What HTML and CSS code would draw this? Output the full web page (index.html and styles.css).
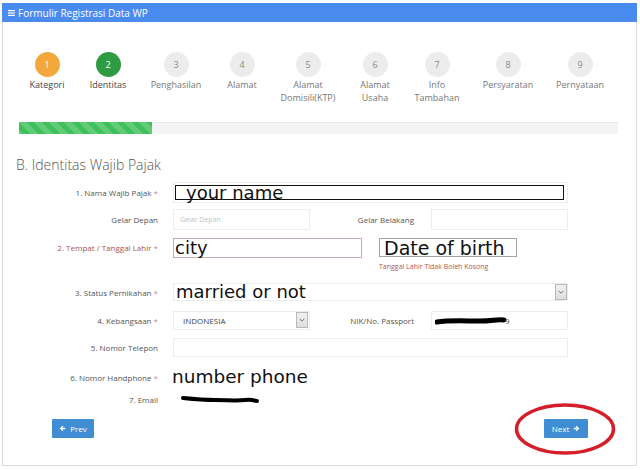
FILE: index.html
```html
<!DOCTYPE html>
<html lang="id">
<head>
<meta charset="utf-8">
<title>Formulir Registrasi Data WP</title>
<link rel="stylesheet" href="styles.css">
</head>
<body>
<div class="panel">
  <div class="panel-heading">
    <svg class="bars" viewBox="0 0 7 6" aria-hidden="true"><rect x="0" y="0" width="7" height="1.2"/><rect x="0" y="2.4" width="7" height="1.2"/><rect x="0" y="4.8" width="7" height="1.2"/></svg>
    <span>Formulir Registrasi Data WP</span>
  </div>

  <div class="steps">
    <div class="step done"><span class="num">1</span><span class="name">Kategori</span></div>
    <div class="step current"><span class="num">2</span><span class="name">Identitas</span></div>
    <div class="step"><span class="num">3</span><span class="name">Penghasilan</span></div>
    <div class="step"><span class="num">4</span><span class="name">Alamat</span></div>
    <div class="step"><span class="num">5</span><span class="name">Alamat<br>Domisili(KTP)</span></div>
    <div class="step"><span class="num">6</span><span class="name">Alamat<br>Usaha</span></div>
    <div class="step"><span class="num">7</span><span class="name">Info<br>Tambahan</span></div>
    <div class="step"><span class="num">8</span><span class="name">Persyaratan</span></div>
    <div class="step"><span class="num">9</span><span class="name">Pernyataan</span></div>
  </div>

  <div class="progress"><div class="bar" style="width:22.2%"></div></div>

  <h3 class="section-title">B. Identitas Wajib Pajak</h3>

  <div class="form">
    <div class="row r1">
      <label class="lbl">1. Nama Wajib Pajak <span class="ast">*</span></label>
      <div class="field full"><span class="mark name-mark">your name</span></div>
    </div>

    <div class="row r2">
      <label class="lbl">Gelar Depan</label>
      <div class="field half"><span class="ph">Gelar Depan</span></div>
      <label class="lbl2">Gelar Belakang</label>
      <div class="field half"></div>
    </div>

    <div class="row r3">
      <label class="lbl err">2. Tempat / Tanggal Lahir <span class="ast">*</span></label>
      <div class="field city"><span class="big city-text">city</span></div>
      <div class="dob-group">
        <div class="field dob"><span class="big dob-text">Date of birth</span></div>
        <div class="help">Tanggal Lahir Tidak Boleh Kosong</div>
      </div>
    </div>

    <div class="row r4">
      <label class="lbl">3. Status Pernikahan <span class="ast">*</span></label>
      <div class="field full select">
        <span class="big status-text">married or not</span>
        <span class="caret"><svg viewBox="0 0 8 5"><polyline points="1,1 4,4 7,1"/></svg></span>
      </div>
    </div>

    <div class="row r5">
      <label class="lbl">4. Kebangsaan <span class="ast">*</span></label>
      <div class="field half select">
        <span class="val">INDONESIA</span>
        <span class="caret"><svg viewBox="0 0 8 5"><polyline points="1,1 4,4 7,1"/></svg></span>
      </div>
      <label class="lbl2">NIK/No. Passport</label>
      <div class="field half nik">
        <svg class="scribble nik-scribble" viewBox="0 0 72 8" aria-hidden="true"><path d="M2 5 C 14 3, 30 4, 44 4 S 62 2, 69 3"/></svg>
        <span class="val">9</span>
      </div>
    </div>

    <div class="row r6">
      <label class="lbl">5. Nomor Telepon</label>
      <div class="field full"></div>
    </div>

    <div class="row r7">
      <label class="lbl">6. Nomor Handphone <span class="ast">*</span></label>
      <span class="big phone-text">number phone</span>
    </div>

    <div class="row r8">
      <label class="lbl">7. Email</label>
      <svg class="scribble email-scribble" viewBox="0 0 78 9" aria-hidden="true"><path d="M2 3 C 12 4, 22 5, 34 5 S 55 6, 64 5 S 72 6, 76 6"/></svg>
    </div>
  </div>

  <div class="actions">
    <button class="btn"><svg class="arrow" viewBox="0 0 10 10"><path d="M1 5 L5 1 L6.3 2.3 L4.4 4.1 H9 V5.9 H4.4 L6.3 7.7 L5 9 Z"/></svg>Prev</button>
    <button class="btn">Next<svg class="arrow" viewBox="0 0 10 10"><path d="M9 5 L5 1 L3.7 2.3 L5.6 4.1 H1 V5.9 H5.6 L3.7 7.7 L5 9 Z"/></svg></button>
  </div>

  <svg class="annot-circle" viewBox="0 0 102 54" aria-hidden="true"><ellipse cx="51" cy="27" rx="48.5" ry="24"/></svg>
</div>
</body>
</html>
```

FILE: styles.css
```css
* { box-sizing: border-box; }

html, body {
  margin: 0;
  padding: 0;
  background: #ffffff;
}

body {
  font-family: "Open Sans", "Noto Sans", sans-serif;
  color: #555;
}

.panel {
  position: relative;
  margin: 3px 0 0 2px;
  width: 635px;
  height: 463px;
  border: 1px solid #dcdcdc;
  border-top: none;
  background: #fff;
}

.panel-heading {
  display: flex;
  align-items: center;
  height: 19px;
  margin: 0 -1px;
  background: #4a8bf0;
  color: #fff;
  font-size: 10px;
  padding-left: 6px;
}

.bars {
  width: 7px;
  height: 6px;
  fill: #fff;
  margin-right: 3px;
}

/* Steps */
.steps {
  display: grid;
  grid-template-columns: 60px 62px 74px 58px 74px 60px 64px 78px 66px;
  margin: 30px 0 0 14px;
}

.step {
  display: flex;
  flex-direction: column;
  align-items: center;
}

.num {
  width: 25px;
  height: 25px;
  border-radius: 50%;
  background: #ececec;
  color: #8a8a8a;
  font-size: 9px;
  display: flex;
  align-items: center;
  justify-content: center;
}

.step.done .num { background: #f4a83b; color: #fff; }
.step.current .num { background: #2f9b42; color: #fff; }

.name {
  margin-top: 1px;
  font-size: 9px;
  line-height: 13px;
  text-align: center;
  color: #777;
  white-space: nowrap;
}

.step.done .name,
.step.current .name { color: #444; }

/* Progress */
.progress {
  margin: 18px 0 0 16px;
  width: 599px;
  height: 12px;
  background: #f4f4f5;
  box-shadow: inset 0 1px 1px rgba(0,0,0,0.04);
}

.bar {
  height: 100%;
  background-color: #3fc05a;
  background-image: linear-gradient(45deg,
    rgba(255,255,255,0.18) 25%, transparent 25%,
    transparent 50%, rgba(255,255,255,0.18) 50%,
    rgba(255,255,255,0.18) 75%, transparent 75%, transparent);
  background-size: 15px 15px;
}

/* Section title */
.section-title {
  margin: 23px 0 0 13px;
  font-size: 14px;
  line-height: 16px;
  font-weight: 300;
  color: #555;
}

/* Form */
.form { margin-top: 9px; }

.row {
  display: flex;
  align-items: center;
}

.lbl {
  flex: none;
  width: 155px;
  margin-right: 15px;
  text-align: right;
  font-size: 8px;
  color: #555;
  white-space: nowrap;
}

.lbl.err { color: #a65353; }

.ast { color: #c98a8a; }

.lbl2 {
  flex: none;
  width: 104px;
  margin-right: 17px;
  text-align: right;
  font-size: 8px;
  color: #555;
  white-space: nowrap;
}

.field {
  position: relative;
  flex: none;
  border: 1px solid #ececec;
  background: #fff;
}

.field.full { width: 395px; }
.field.half { width: 137px; }

.r1 { height: 21px; margin-bottom: 6px; }
.r1 .field { height: 21px; }

.mark {
  display: block;
  margin: 2px 0 0 1px;
  width: 389px;
  height: 15px;
  border: 1.5px solid #111;
}

.big {
  font-family: "DejaVu Sans", Verdana, sans-serif;
  color: #111;
  white-space: nowrap;
}

.name-mark {
  font-family: "DejaVu Sans", Verdana, sans-serif;
  font-size: 18px;
  line-height: 14px;
  color: #111;
  padding-left: 10px;
}

.r2 { height: 21px; margin-bottom: 8px; }
.r2 .field { height: 21px; display: flex; align-items: center; }

.ph {
  padding-left: 6px;
  font-size: 7px;
  color: #c2c2c2;
}

.r3 {
  align-items: flex-start;
  margin-bottom: 9px;
}

.r3 .lbl { line-height: 20px; }

.field.city {
  width: 189px;
  height: 20px;
  margin-right: 17px;
  border-color: #c9abab;
}

.city-text {
  display: block;
  font-size: 18px;
  line-height: 17px;
  padding-left: 1px;
}

.dob-group {
  flex: none;
  width: 138px;
}

.field.dob {
  width: 138px;
  height: 19px;
  border-color: #a8a0a0;
}

.dob-text {
  display: block;
  font-size: 19px;
  line-height: 19px;
  padding-left: 4px;
}

.help {
  margin-top: 3px;
  font-size: 7px;
  line-height: 14px;
  color: #b35757;
  white-space: nowrap;
}

.r4 { height: 18px; margin-bottom: 10px; }
.r4 .field { height: 18px; }

.status-text {
  display: block;
  font-size: 18px;
  line-height: 15.5px;
  padding-left: 2px;
}

.caret {
  position: absolute;
  right: 0;
  top: 0;
  bottom: 0;
  width: 12px;
  display: flex;
  align-items: center;
  justify-content: center;
  background: linear-gradient(#f1f1f1, #dedede);
  border: 1px solid #b9b9b9;
}

.caret svg {
  width: 6px;
  height: 4px;
  fill: none;
  stroke: #666;
  stroke-width: 1.2;
}

.r5 { height: 19px; margin-bottom: 8px; }
.r5 .field { height: 19px; display: flex; align-items: center; }

.r5 .select .caret { top: 0; bottom: 1px; right: 1px; }

.val {
  font-size: 8px;
  color: #444;
}

.r5 .select .val { padding-left: 9px; }

.nik .scribble { margin-left: 3px; }

.scribble {
  flex: none;
  fill: none;
  stroke: #000;
  stroke-linecap: round;
}

.nik-scribble {
  width: 72px;
  height: 8px;
  stroke-width: 5;
}

.nik .val { color: #555; margin-left: -2px; }

.r6 { height: 19px; margin-bottom: 9px; }
.r6 .field { height: 19px; }

.r7 { height: 22px; margin-bottom: 4px; }

.phone-text {
  margin-left: -1px;
  font-size: 18.5px;
  line-height: 21px;
  align-self: flex-start;
}

.r8 { height: 14px; margin-bottom: 13px; }

.email-scribble {
  width: 78px;
  height: 9px;
  margin-left: 8px;
  stroke-width: 4;
}

/* Buttons */
.actions {
  display: flex;
  justify-content: space-between;
  padding: 0 48px 0 49px;
}

.btn {
  display: flex;
  align-items: center;
  justify-content: center;
  gap: 4px;
  height: 19px;
  padding: 0 7px;
  border: none;
  border-radius: 1px;
  background: #3f8dd2;
  color: #fff;
  font-family: "Open Sans", "Noto Sans", sans-serif;
  font-size: 8px;
}

.btn:first-child { width: 42px; }
.btn:last-child { width: 44px; }

.arrow {
  width: 7px;
  height: 7px;
  fill: #fff;
}

/* Hand-drawn annotation over the Next button */
.annot-circle {
  position: absolute;
  left: 511px;
  top: 399px;
  width: 102px;
  height: 54px;
  fill: none;
  stroke: #d41f2b;
  stroke-width: 3.5;
}
```
